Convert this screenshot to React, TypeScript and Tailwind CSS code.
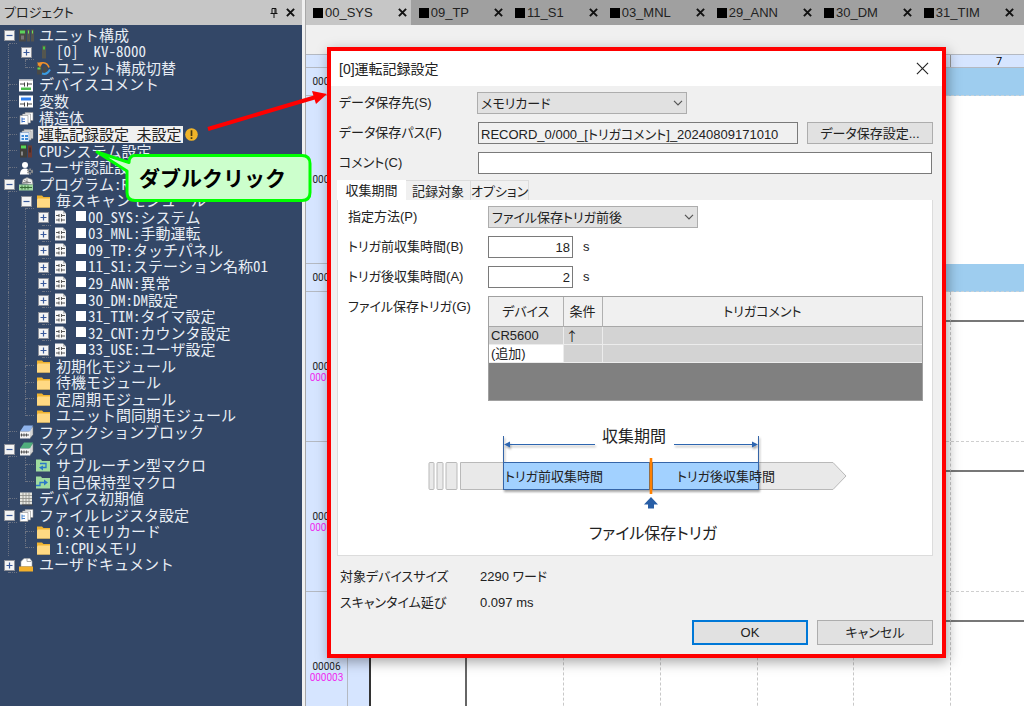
import React from "react";

const UI_FONT = "font-['Liberation_Sans','Noto_Sans_CJK_JP',sans-serif] [font-feature-settings:'palt']";
const MONO_FONT = "font-['Noto_Sans_Mono_CJK_JP','Noto_Sans_CJK_JP',monospace]";

/* ---------- Project tree ---------- */

type IconKind =
  | "unit" | "cpu" | "swap" | "comment" | "variable" | "stack" | "record" | "system" | "user"
  | "program" | "folder" | "ladder" | "block" | "macro" | "sub" | "hold" | "initial" | "register" | "document";

type Node = { level: number; icon: IconKind; label: string; toggle?: "+" | "-"; selected?: boolean; mark?: boolean };

const NODES: Node[] = [
  { level: 0, icon: "unit", label: "ユニット構成", toggle: "-" },
  { level: 1, icon: "cpu", label: "[0]  KV-8000", toggle: "+" },
  { level: 1, icon: "swap", label: "ユニット構成切替" },
  { level: 0, icon: "comment", label: "デバイスコメント" },
  { level: 0, icon: "variable", label: "変数" },
  { level: 0, icon: "stack", label: "構造体" },
  { level: 0, icon: "record", label: "運転記録設定 未設定", selected: true },
  { level: 0, icon: "system", label: "CPUシステム設定" },
  { level: 0, icon: "user", label: "ユーザ認証設定" },
  { level: 0, icon: "program", label: "プログラム:R", toggle: "-" },
  { level: 1, icon: "folder", label: "毎スキャンモジュール", toggle: "-" },
  { level: 2, icon: "ladder", label: "00_SYS:システム", toggle: "+", mark: true },
  { level: 2, icon: "ladder", label: "03_MNL:手動運転", toggle: "+", mark: true },
  { level: 2, icon: "ladder", label: "09_TP:タッチパネル", toggle: "+", mark: true },
  { level: 2, icon: "ladder", label: "11_S1:ステーション名称01", toggle: "+", mark: true },
  { level: 2, icon: "ladder", label: "29_ANN:異常", toggle: "+", mark: true },
  { level: 2, icon: "ladder", label: "30_DM:DM設定", toggle: "+", mark: true },
  { level: 2, icon: "ladder", label: "31_TIM:タイマ設定", toggle: "+", mark: true },
  { level: 2, icon: "ladder", label: "32_CNT:カウンタ設定", toggle: "+", mark: true },
  { level: 2, icon: "ladder", label: "33_USE:ユーザ設定", toggle: "+", mark: true },
  { level: 1, icon: "folder", label: "初期化モジュール" },
  { level: 1, icon: "folder", label: "待機モジュール" },
  { level: 1, icon: "folder", label: "定周期モジュール" },
  { level: 1, icon: "folder", label: "ユニット間同期モジュール" },
  { level: 0, icon: "block", label: "ファンクションブロック" },
  { level: 0, icon: "macro", label: "マクロ", toggle: "-" },
  { level: 1, icon: "sub", label: "サブルーチン型マクロ" },
  { level: 1, icon: "hold", label: "自己保持型マクロ" },
  { level: 0, icon: "initial", label: "デバイス初期値" },
  { level: 0, icon: "register", label: "ファイルレジスタ設定", toggle: "-" },
  { level: 1, icon: "folder", label: "0:メモリカード" },
  { level: 1, icon: "folder", label: "1:CPUメモリ" },
  { level: 0, icon: "document", label: "ユーザドキュメント", toggle: "+" },
];

/* True when a later sibling at `level` exists below row `index`. */
function continues(index: number, level: number) {
  for (let i = index + 1; i < NODES.length; i++) {
    if (NODES[i].level < level) return false;
    if (NODES[i].level === level) return true;
  }
  return false;
}

function stackArt(accent: string) {
  return (
    <>
      <path d="M6 1h8v8h-8z" fill="#fff" stroke="#8a8a8a" strokeWidth=".6" />
      <path d="M3.500 2.500h8v9h-8z" fill="#fff" stroke="#8a8a8a" strokeWidth=".6" />
      <path d="M1 4h8v9H1z" fill="#fff" stroke="#8a8a8a" strokeWidth=".6" />
      <path d="M3 6v5M3 7.500h3M3 10h3" stroke={accent} fill="none" />
    </>
  );
}

function bookArt(cover: string) {
  return (
    <>
      <path d="M10 5l4-4v8l-3 4z" fill="#d8d8d8" stroke="#777" strokeWidth=".5" />
      <path d="M1 6L5 0h9l-3 6z" fill={cover} />
      <path d="M1 6h10v7H1z" fill="#f2f2f2" />
      <path d="M2.500 8v3M5 8v3M7.500 8v3M1.500 9.500h8.500" stroke="#555" />
    </>
  );
}

const ART: Record<IconKind, React.ReactNode> = {
  unit: (
    <>
      <path d="M0 1h7v12H0z" fill="#4a4a46" />
      <path d="M1 2h5v3H1z" fill="#5bd45b" />
      <path d="M2 7h3v4H2z" fill="#777" />
      <path d="M8 1h3v12H8zM12 1h3v12h-3z" fill="#55554f" />
      <path d="M9 2h1v3H9zM13 2h1v3h-1z" fill="#6adf5a" />
    </>
  ),
  cpu: (
    <>
      <path d="M6 0h4v13H6z" fill="#54564e" />
      <path d="M7 1h2v3H7z" fill="#45c545" />
    </>
  ),
  swap: (
    <>
      <path d="M1 4h5v9H1zM7 5h4v7H7z" fill="#4a4a46" />
      <path d="M1.500 6h3v2h-3z" fill="#62d45b" />
      <path d="M2 4c2-4 9-4 11 2" fill="none" stroke="#f0902a" strokeWidth="1.600" />
      <path d="M1 1l6 0-3 5z" fill="#f0902a" />
      <path d="M6 12c3 1 6 0 8-4" fill="none" stroke="#3a9be0" strokeWidth="2" />
    </>
  ),
  comment: (
    <>
      <path d="M0 1h14v12H0z" fill="#fff" />
      <path d="M0 1h14v1.500H0z" fill="#cfcfcf" />
      <path d="M1 5.500h4M9 5.500h4M5.500 4v4M8.500 4v4" stroke="#444" />
      <path d="M2 9h10v2.500H2z" fill="#4bbd4b" />
    </>
  ),
  variable: (
    <>
      <path d="M0 1h14v12H0z" fill="#fff" />
      <path d="M2 3h10v3H2z" fill="#2f7ff0" />
      <path d="M1 9.500h4M9 9.500h4M5.500 8v4M8.500 8v4" stroke="#444" />
    </>
  ),
  stack: stackArt("#3b6fc4"),
  record: (
    <>
      <path d="M5 1h9v9H5z" fill="#e8e8e8" stroke="#8a8a8a" strokeWidth=".6" />
      <path d="M3 2.500h9v9H3z" fill="#e8e8e8" stroke="#8a8a8a" strokeWidth=".6" />
      <path d="M1 4h9v9H1z" fill="#e9f3ff" stroke="#6d91bd" strokeWidth=".6" />
      <path d="M2.500 6.500h2.500v2H2.500zM6 6.500h3v2H6zM2.500 9.500h2.500v2H2.500zM6 9.500h3v2H6z" fill="#3f8ad8" />
    </>
  ),
  system: (
    <>
      <path d="M1 0h7v13H1z" fill="#3f3f3b" />
      <path d="M2 1h5v3H2z" fill="#56d656" />
      <path d="M2 7h2v4H2z" fill="#888" />
      <path d="M9 1h4v12H9z" fill="#6b3a32" />
      <path d="M10 3h2v5h-2z" fill="#4a2b28" />
    </>
  ),
  user: (
    <>
      <circle cx="6" cy="3.500" r="3" fill="#fff" />
      <path d="M1 13c0-4 2-6 5-6s4 1 4 6z" fill="#fff" />
      <circle cx="11" cy="10" r="2.200" fill="none" stroke="#8f8f8f" strokeWidth="1.800" strokeDasharray="1.400 .8" />
      <circle cx="11" cy="10" r="1.600" fill="none" stroke="#8f8f8f" />
    </>
  ),
  program: (
    <>
      <path d="M3 6l1-4 4-2 5 2 1 5z" fill="#f2f2f2" stroke="#888" strokeWidth=".6" />
      <path d="M5 3l5 2M4 5h8M8 1v5" stroke="#777" strokeWidth=".8" />
      <path d="M0 7h14v6H0z" fill="#9ed69e" />
      <path d="M3 8v4M6 8v4M9 8v4M1 10h12" stroke="#376b37" />
    </>
  ),
  folder: (
    <>
      <path d="M1 1h5l1.500 1.500H14V13H1z" fill="#f0b431" />
      <path d="M2 4h12v9H1V5z" fill="#ffd983" />
    </>
  ),
  ladder: (
    <>
      <path d="M2 0h8l3 3v10H2z" fill="#f7f7f7" />
      <path d="M10 0v3h3z" fill="#b9b9b9" />
      <path d="M3 5h3M9 5h3M3 9.500h3M9 9.500h3M6 3.500v3M8.500 3.500v3M6 8v3M8.500 8v3" stroke="#444" strokeWidth=".9" />
    </>
  ),
  block: bookArt("#8fb4ec"),
  macro: bookArt("#4fae7c"),
  sub: (
    <>
      <path d="M0 1h5l1 1.500h8V13H0z" fill="#9fdc9f" />
      <path d="M4 5h6v4H6" fill="none" stroke="#2b78c8" strokeWidth="1.300" />
      <path d="M3 9l4-2v5z" fill="#2b78c8" />
    </>
  ),
  hold: (
    <>
      <path d="M0 1h5l1 1.500h8V13H0z" fill="#9fdc9f" />
      <path d="M0 10h4V7h5" fill="none" stroke="#2b78c8" strokeWidth="1.300" />
      <path d="M12 7L8 4v6z" fill="#2b78c8" />
    </>
  ),
  initial: (
    <>
      <path d="M1 0h12v12H1z" fill="#e6e6e0" />
      <path d="M1 3h12M1 6h12M1 9h12M4 0v12M7 0v12M10 0v12" stroke="#8c8c86" strokeWidth=".8" />
      <path d="M3 12.500h11" stroke="#444" />
    </>
  ),
  register: stackArt("#4a86cf"),
  document: (
    <>
      <path d="M2 8V3l3-3h6l2 3v5z" fill="#fff" stroke="#aaa" strokeWidth=".6" />
      <path d="M8 0v3h4" fill="none" stroke="#888" strokeWidth=".7" />
      <path d="M0 8h14v5H0z" fill="#f2b02c" />
    </>
  ),
};

function TreeRow({ node, index }: { node: Node; index: number }) {
  const cells = [];
  for (let l = 0; l < node.level; l++) {
    cells.push(
      <span key={l} className="flex w-[17px] justify-center">
        {continues(index, l) && <span className="border-l border-dotted border-[#6b7281]" />}
      </span>,
    );
  }
  return (
    <li className="flex min-h-0 items-stretch whitespace-pre">
      {cells}
      <span className="grid w-[17px] grid-cols-[9px_8px] grid-rows-2">
        <span className={index === 0 ? "" : "border-r border-dotted border-[#6b7281]"} />
        <span className="border-b border-dotted border-[#6b7281]" />
        <span className={continues(index, node.level) ? "border-r border-dotted border-[#6b7281]" : ""} />
        <span />
        {node.toggle && (
          <button
            aria-label={`${node.label} の展開`}
            className="col-span-2 col-start-1 row-span-2 row-start-1 mt-0.5 ml-1 grid size-[11px] place-items-center self-center border border-[#8d9099] bg-[#f4f4f4]"
          >
            <svg viewBox="0 0 9 9" className="size-[9px]">
              <path d={node.toggle === "+" ? "M1.500 4.500h6M4.500 1.500v6" : "M1.500 4.500h6"} stroke="#3a5a9c" strokeWidth="1.200" />
            </svg>
          </button>
        )}
      </span>
      <svg viewBox="0 0 15 13" className="ml-0.5 h-[14px] w-[15px] shrink-0 self-center" aria-hidden="true">
        {ART[node.icon]}
      </svg>
      <span
        className={
          node.selected
            ? "ml-1 flex items-center bg-[#f0f0f0] px-px pb-0.5 leading-none text-[#222]"
            : "ml-1 flex items-center pb-0.5 pl-px leading-none text-[#e9eef5]"
        }
      >
        {node.mark && <span className="mr-0.5 ml-[3px] size-[10px] bg-white" />}
        {node.label}
      </span>
      {node.selected && (
        <svg viewBox="0 0 14 14" className="ml-0.5 size-[13px] self-center" aria-hidden="true">
          <circle cx="7" cy="7" r="6.800" fill="#f0b429" />
          <path d="M7 2.500v6M7 10v1.800" stroke="#4a3a10" strokeWidth="1.800" />
        </svg>
      )}
    </li>
  );
}

function ProjectPane() {
  return (
    <aside className="flex w-[302px] shrink-0 flex-col bg-[#334767]">
      <header className={`flex h-[25px] items-center bg-[#c6c6c6] pr-1.5 pl-1 text-[13px] text-[#222] ${UI_FONT}`}>
        <h2 className="flex-1">プロジェクト</h2>
        <button aria-label="ピン留め" className="mr-1.5 p-px">
          <svg viewBox="0 0 8 10" className="h-[10px] w-2" fill="none" stroke="#111">
            <path d="M2 .5h4v5H2zM5 1v4M.5 5.500h7M4 6v4" />
          </svg>
        </button>
        <button aria-label="閉じる" className="p-px">
          <svg viewBox="0 0 10 10" className="size-[9px]" stroke="#111" strokeWidth="2.200">
            <path d="M1 1l8 8M9 1L1 9" />
          </svg>
        </button>
      </header>
      <ul className={`mt-0.5 grid h-[546px] auto-rows-fr text-[15px] ${MONO_FONT}`}>
        {NODES.map((n, i) => (
          <TreeRow key={n.label} node={n} index={i} />
        ))}
      </ul>
    </aside>
  );
}

/* ---------- Ladder editor ---------- */

const TABS = ["00_SYS", "09_TP", "11_S1", "03_MNL", "29_ANN", "30_DM", "31_TIM"];

function EditorTabs() {
  return (
    <nav className={`flex h-[25px] overflow-hidden bg-[#a0a0a0] text-[13px] text-[#222] ${UI_FONT}`}>
      {TABS.map((t, i) => (
        <div key={t} className={i === 0 ? "flex shrink-0 items-center bg-[#c6c6c6] pr-1 pl-[7px]" : "flex shrink-0 items-center pr-1 pl-2"}>
          <span className="mr-0.5 size-[10px] bg-black" />
          <a href={`#${t}`} className="mr-[25px]">{t}</a>
          <button aria-label={`${t} を閉じる`}>
            <svg viewBox="0 0 10 10" className="size-[9px]" stroke="#111" strokeWidth="2.200">
              <path d="M1 1l8 8M9 1L1 9" />
            </svg>
          </button>
        </div>
      ))}
    </nav>
  );
}

type Rung = { line: string; step?: string; size: string; band?: boolean; blank?: boolean };

const RUNGS: Rung[] = [
  { line: "00001", size: "h-[28px]", band: true },
  { line: "00002", size: "h-[168px]", blank: true },
  { line: "00003", size: "h-[28px]", band: true },
  { line: "00004", step: "000001", size: "h-[150px]" },
  { line: "00005", step: "000002", size: "h-[150px]" },
  { line: "00006", step: "000003", size: "h-[150px]" },
];

function RungBody({ rung }: { rung: Rung }) {
  if (rung.band) return <div className="flex-1 border-b border-dashed border-[#c9d3da] bg-[#9ecdef]" />;
  if (rung.blank) return <div className="flex-1" />;
  return (
    <div className="grid flex-1 grid-cols-[96px_97px_97px_97px_96px_97px_1fr] grid-rows-[30px_1fr] border-b border-dashed border-[#cfcfcf]">
      {[0, 1].map((r) =>
        [0, 1, 2, 3, 4, 5, 6].map((c) => (
          <div
            key={`${r}${c}`}
            className={`${r === 0 ? "border-b-2 border-b-[#777]" : ""} ${c === 0 ? "border-r-2 border-r-[#666]" : c < 6 ? "border-r border-r-[#c8c8c8] [border-right-style:dashed]" : ""}`}
          />
        )),
      )}
    </div>
  );
}

function Ladder() {
  return (
    <div className="flex flex-1 flex-col overflow-hidden bg-white">
      <div className="flex h-[14px] shrink-0 border-y border-[#b4b9c2] bg-[#d6e5ff]">
        <div className="ml-auto flex w-[74px] items-center border-l border-[#999] pl-[45px] font-['Roboto',sans-serif] text-[11px] leading-none">
          7
        </div>
      </div>
      {RUNGS.map((r) => (
        <div key={r.line} className={`flex shrink-0 ${r.size}`}>
          <div
            className={`flex w-[42px] flex-col items-center justify-center border-r border-b border-[#b4b9c2] bg-[#d6e5ff] font-['Roboto',sans-serif] text-[10px] leading-[11px] text-[#222] ${r.step ? "pt-2.5" : ""}`}
          >
            <span>{r.line}</span>
            {r.step && <span className="text-[#f02af0]">{r.step}</span>}
          </div>
          <div className="w-[23px] border-r-2 border-r-[#333] bg-[#d6e5ff]" />
          <RungBody rung={r} />
        </div>
      ))}
    </div>
  );
}

/* ---------- Dialog ---------- */

function Dropdown({ id, value }: { id: string; value: string }) {
  return (
    <div className="grid w-[210px] items-center">
      <select
        id={id}
        className="col-start-1 row-start-1 h-[22px] w-full appearance-none border border-[#adadad] bg-[#e1e1e1] pl-[3px] leading-none"
      >
        <option>{value}</option>
      </select>
      <svg viewBox="0 0 10 6" className="pointer-events-none col-start-1 row-start-1 mr-1 h-1.5 w-2.5 justify-self-end" fill="none" stroke="#555">
        <path d="M1 .8l4 4 4-4" strokeWidth="1.200" />
      </svg>
    </div>
  );
}

const FIELD = "h-[22px] border border-[#7a7a7a] px-0.5 leading-none";

function PeriodDiagram() {
  return (
    <svg viewBox="0 -8 420 124" className="mt-[21px] ml-20 h-[124px] w-[420px]" role="img" aria-label="収集期間">
      <defs>
        <filter id="soft" x="-5%" y="-20%" width="110%" height="160%">
          <feDropShadow dx="1" dy="2" stdDeviation="1" floodColor="#000" floodOpacity=".35" />
        </filter>
      </defs>
      <g fill="#e9e9e9" stroke="#b9b9b9">
        <rect x="1" y="32.500" width="5" height="27" rx="1" />
        <rect x="9" y="32.500" width="6" height="27" rx="1" />
        <rect x="18" y="32.500" width="11" height="27" rx="1" />
        <path d="M32.500 32.500H405l13 13.500-13 13.500H32.500z" />
      </g>
      <g filter="url(#soft)">
        <rect x="75.500" y="32.500" width="255" height="27" fill="#a2d1ff" stroke="#3465a8" />
        <path d="M75.500 6v27M330.500 6v27" stroke="#3465a8" />
        <path d="M80 14.500h87M246 14.500h80" stroke="#2f66b0" />
        <path d="M76 14.500l6-3v6zM330 14.500l-6-3v6z" fill="#2f66b0" />
      </g>
      <path d="M221.500 32v28M224.500 32v28" stroke="#666" />
      <path d="M223 28v36" stroke="#ff8000" strokeWidth="2.600" />
      <path d="M223 67l7 7.500h-4v4h-6v-4h-4z" fill="#285ea6" />
      <g fill="#222" fontSize="13">
        <text x="77" y="51">トリガ前収集時間</text>
        <text x="249" y="51">トリガ後収集時間</text>
      </g>
      <g fill="#222" fontSize="16" textAnchor="middle">
        <text x="206" y="12">収集期間</text>
        <text x="225" y="109">ファイル保存トリガ</text>
      </g>
    </svg>
  );
}

function RecordDialog() {
  return (
    <section
      role="dialog"
      aria-label="[0]運転記録設定"
      className={`absolute top-[47px] left-[327px] w-[619px] border-4 border-[#ff0000] bg-[#f0f0f0] text-[13px] text-[#222] shadow-[2px_4px_12px_rgba(0,0,0,0.35)] ${UI_FONT}`}
    >
      <header className="flex h-[35px] items-center bg-white pr-[13px] pl-2">
        <h1 className="flex-1 text-sm">[0]運転記録設定</h1>
        <button aria-label="閉じる">
          <svg viewBox="0 0 14 14" className="size-[13px]" stroke="#222" strokeWidth="1.200">
            <path d="M1 1l12 12M13 1L1 13" />
          </svg>
        </button>
      </header>

      <div className="grid grid-cols-[138px_1fr] gap-y-2 pt-1.5 pr-[9px] pl-2 leading-[22px]">
        <label htmlFor="dest">データ保存先(S)</label>
        <Dropdown id="dest" value="メモリカード" />
        <label htmlFor="path">データ保存パス(F)</label>
        <div className="flex gap-[9px]">
          <input id="path" readOnly value="RECORD_0/000_[トリガコメント]_20240809171010" className={`ml-px min-w-0 flex-1 bg-[#f0f0f0] ${FIELD}`} />
          <button className="h-[22px] w-[126px] border border-[#adadad] bg-[#e1e1e1] leading-none">データ保存設定...</button>
        </div>
        <label htmlFor="memo">コメント(C)</label>
        <input id="memo" className={`mr-px ml-px bg-white ${FIELD}`} />
      </div>

      <div role="tablist" className="mt-1.5 flex h-5 pl-1.5 leading-none whitespace-nowrap">
        <button role="tab" aria-selected="true" className="w-[69px] bg-white">収集期間</button>
        <button role="tab" className="w-[65px] border-t border-r border-[#dcdcdc] pt-0.5">記録対象</button>
        <button role="tab" className="w-[58px] border-t border-r border-[#dcdcdc] pt-0.5">オプション</button>
      </div>

      <div role="tabpanel" className="mr-[9px] ml-1.5 border border-t-0 border-[#dcdcdc] bg-white pr-[9px] pb-[9px] pl-2.5">
        <div className="grid grid-cols-[140px_1fr] gap-y-2 pt-1.5 leading-[22px]">
          <label htmlFor="method">指定方法(P)</label>
          <Dropdown id="method" value="ファイル保存トリガ前後" />
          <label htmlFor="before">トリガ前収集時間(B)</label>
          <div className="flex gap-2.5">
            <input id="before" defaultValue="18" className={`w-[85px] text-right ${FIELD}`} />s
          </div>
          <label htmlFor="after">トリガ後収集時間(A)</label>
          <div className="flex gap-2.5">
            <input id="after" defaultValue="2" className={`w-[85px] text-right ${FIELD}`} />s
          </div>
          <span>ファイル保存トリガ(G)</span>
          <div className="h-[105px] border border-[#a0a0a0] bg-[#808080]">
            <table className="w-full table-fixed border-collapse text-left leading-none">
              <thead className="bg-[#f0f0f0]">
                <tr className="h-[29px] border-b border-[#a8a8a8] text-center">
                  <th className="w-[74px] border-r border-[#b0b0b0] font-normal">デバイス</th>
                  <th className="w-[39px] border-r border-[#b0b0b0] font-normal">条件</th>
                  <th className="font-normal">トリガコメント</th>
                </tr>
              </thead>
              <tbody className="bg-[#d3d3d3]">
                <tr className="h-[18px] border-b border-[#ececec]">
                  <td className="border-r border-[#ececec] pl-0.5">CR5600</td>
                  <td className="border-r border-[#ececec] pl-0.5 font-['Noto_Sans_CJK_JP',sans-serif] [font-feature-settings:normal]">↑</td>
                  <td />
                </tr>
                <tr className="h-[18px] border-b border-[#ececec]">
                  <td className="border-r border-[#ececec] bg-white pl-0.5">(追加)</td>
                  <td className="border-r border-[#ececec]" />
                  <td />
                </tr>
              </tbody>
            </table>
          </div>
        </div>
        <PeriodDiagram />
      </div>

      <dl className="grid grid-cols-[140px_1fr] gap-y-1 pt-2.5 pl-[9px] leading-[22px]">
        <dt>対象デバイスサイズ</dt>
        <dd>2290 ワード</dd>
        <dt>スキャンタイム延び</dt>
        <dd>0.097 ms</dd>
      </dl>

      <footer className="mt-1.5 flex justify-end gap-[9px] pr-[9px] pb-[9px]">
        <button className="h-[25px] w-[116px] border-2 border-[#0078d7] bg-[#e1e1e1] leading-none">OK</button>
        <button className="h-[25px] w-[116px] border border-[#adadad] bg-[#e1e1e1] leading-none">キャンセル</button>
      </footer>
    </section>
  );
}

/* ---------- Annotations ---------- */

function Callout() {
  return (
    <div className="absolute top-[150px] left-[94px] grid h-[54px] w-[220px]">
      <svg viewBox="0 0 220 54" className="col-start-1 row-start-1 h-[54px] w-[220px]" aria-hidden="true">
        <path
          d="M3 2L35 12.500Q35 5.500 41 5.500H208Q216 5.500 216 13.500V42.500Q216 50.500 208 50.500H41Q33 50.500 33 42.500V21Z"
          fill="#ccffcc"
          stroke="#00ff00"
          strokeWidth="3"
          strokeLinejoin="round"
        />
      </svg>
      <p className="col-start-1 row-start-1 self-center pl-[45px] font-['Noto_Sans_CJK_JP',sans-serif] text-[21px] leading-none font-bold text-black">
        ダブルクリック
      </p>
    </div>
  );
}

function Arrow() {
  return (
    <svg viewBox="0 0 122 44" className="absolute top-[88px] left-[206px] h-[44px] w-[122px]" aria-hidden="true">
      <path d="M2 41L110 9" stroke="#ff0000" strokeWidth="4" />
      <path d="M121 6L106 3l4 13z" fill="#ff0000" />
    </svg>
  );
}

export default function App() {
  return (
    <div className="relative flex h-screen overflow-hidden bg-[#f0f0f0]">
      <ProjectPane />
      <div className="w-1 shrink-0 border-r border-[#a8a8a8] bg-[#f0f0f0]" />
      <main className="flex min-w-0 flex-1 flex-col">
        <EditorTabs />
        <div className="h-[29px] shrink-0 bg-[#f0f0f0]" />
        <Ladder />
      </main>
      <RecordDialog />
      <Arrow />
      <Callout />
    </div>
  );
}
